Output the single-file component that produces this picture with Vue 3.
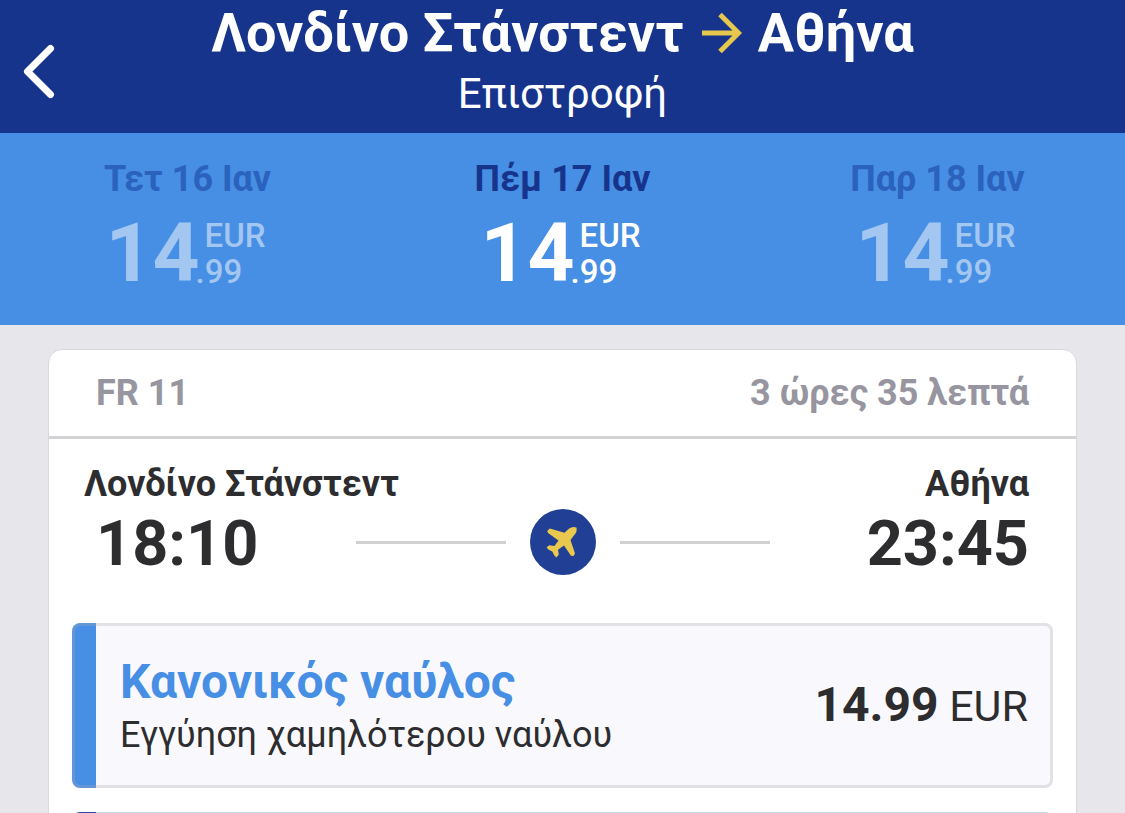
<script setup>
import { ref } from 'vue'

const days = [
  { label: 'Τετ 16 Ιαν', whole: '14', cents: '.99', currency: 'EUR' },
  { label: 'Πέμ 17 Ιαν', whole: '14', cents: '.99', currency: 'EUR' },
  { label: 'Παρ 18 Ιαν', whole: '14', cents: '.99', currency: 'EUR' },
]
const selected = ref(1)
</script>

<template>
  <div class="page">
    <header class="header">
      <button class="back" type="button" aria-label="Πίσω">
        <svg width="34" height="58" viewBox="0 0 34 58" fill="none" stroke="#fff" stroke-width="7" stroke-linecap="round" stroke-linejoin="round">
          <path d="M29.500 6.500 6.500 29.500 29.500 52.500" />
        </svg>
      </button>
      <div class="heading">
        <h1 class="title">
          <span>Λονδίνο Στάνστεντ</span>
          <svg width="42" height="42" viewBox="0 0 42 42" fill="none" stroke="#e6c84f" stroke-width="5">
            <path d="M2 21H38M20 2.500 38.500 21 20 39.500" />
          </svg>
          <span>Αθήνα</span>
        </h1>
        <p class="subtitle">Επιστροφή</p>
      </div>
    </header>

    <nav class="days">
      <button
        v-for="(day, i) in days"
        :key="day.label"
        type="button"
        class="day"
        :class="{ active: i === selected }"
        @click="selected = i"
      >
        <span class="date">{{ day.label }}</span>
        <span class="price">
          <span class="whole">{{ day.whole }}</span>
          <span class="side">
            <span class="currency">{{ day.currency }}</span>
            <span>{{ day.cents }}</span>
          </span>
        </span>
      </button>
    </nav>

    <main class="card">
      <div class="card-head">
        <span>FR 11</span>
        <span>3 ώρες 35 λεπτά</span>
      </div>
      <section class="route">
        <div class="cities">
          <span>Λονδίνο Στάνστεντ</span>
          <span>Αθήνα</span>
        </div>
        <div class="times">
          <time class="time">18:10</time>
          <div class="wire">
            <span class="line"></span>
            <svg width="66" height="66" viewBox="0 0 66 66">
              <circle cx="33" cy="33" r="33" fill="#213f94" />
              <path fill="#e8c84e" d="M46.500 18.500C47.200 22 46 24.500 43.500 27L40.500 31L45 44.500L43.500 47L41 46.800L34 36.500L28 40.800L28.800 45.500L26.500 48.500L24.300 46.500L22.300 42.500L18.300 40.500L16.600 38.300L19.300 36.300L24.500 37L28.500 31.500L18 24L17.200 22L19.800 19.500L34.500 23.800L38 20.500C40.500 18 43.500 17.300 46.500 18.500Z" />
            </svg>
            <span class="line"></span>
          </div>
          <time class="time end">23:45</time>
        </div>
      </section>

      <section class="fares">
        <button type="button" class="fare">
          <span class="fare-text">
            <span class="fare-name">Κανονικός ναύλος</span>
            <span class="fare-note">Εγγύηση χαμηλότερου ναύλου</span>
          </span>
          <span class="fare-price"><strong>14.99</strong> EUR</span>
        </button>
        <div class="fare plus"></div>
      </section>
    </main>
  </div>
</template>

<style>
body {
  background: #e6e6eb;
}
</style>

<style scoped>
.page {
  height: 100vh;
  overflow: hidden;
  background: #e6e6eb;
  color: #2d2d2f;
  font-family: Roboto, "Noto Sans", sans-serif;
}

button {
  margin: 0;
  padding: 0;
  border: 0;
  background: none;
  color: inherit;
  font: inherit;
  cursor: pointer;
}

.header {
  display: grid;
  grid-template-columns: 1fr auto 1fr;
  background: #17348d;
  color: #fff;
  padding-bottom: 15px;
}

.back {
  justify-self: start;
  align-self: start;
  padding: 42px 21px 0;
}

.back svg,
.title svg,
.wire svg {
  display: block;
}

.title {
  display: flex;
  align-items: center;
  gap: 16px;
  margin: 0;
  font-size: 54px;
  font-weight: 700;
  line-height: 66px;
}

.subtitle {
  margin: 4px 0 0;
  font-size: 42px;
  font-weight: 400;
  line-height: 48px;
  text-align: center;
}

.days {
  display: grid;
  grid-template-columns: repeat(3, 1fr);
  background: #478fe4;
}

.day {
  display: flex;
  flex-direction: column;
  align-items: center;
  gap: 10px;
  padding: 24px 0 30px;
  color: #a3c7f1;
}

.date {
  color: #2b62bd;
  font-size: 36px;
  font-weight: 700;
  line-height: 44px;
}

.price {
  display: flex;
  font-weight: 700;
}

.whole {
  font-size: 82px;
  line-height: 84px;
}

.side {
  display: flex;
  flex-direction: column;
  align-items: flex-start;
  margin-left: -4px;
  padding: 7px 4px 0 0;
  font-size: 33px;
  font-weight: 500;
  line-height: 36px;
}

.currency {
  padding-left: 9px;
}

.day.active {
  color: #fff;
}

.day.active .date {
  color: #17348d;
}

.card {
  margin: 24px 48px 0;
  border: 1px solid #d8d8dd;
  border-radius: 14px 14px 0 0;
  background: #fff;
}

.card-head {
  display: flex;
  justify-content: space-between;
  padding: 0 47px;
  border-bottom: 3px solid #d3d3d6;
  color: #9695a0;
  font-size: 36px;
  font-weight: 700;
  line-height: 86px;
}

.route {
  padding: 23px 47px 0 35px;
}

.cities {
  display: flex;
  justify-content: space-between;
  font-size: 36px;
  font-weight: 700;
  line-height: 44px;
}

.times {
  display: grid;
  grid-template-columns: 1fr auto 1fr;
  margin-top: 3px;
  padding-left: 12px;
}

.time {
  font-size: 63px;
  font-weight: 700;
  line-height: 70px;
}

.time.end {
  text-align: right;
}

.wire {
  display: flex;
  align-items: center;
  align-self: start;
  gap: 24px;
}

.line {
  width: 150px;
  height: 3px;
  background: #d1d1d4;
}

.fares {
  display: flex;
  flex-direction: column;
  gap: 24px;
  padding: 44px 23px 24px;
}

.fare {
  display: flex;
  align-items: center;
  justify-content: space-between;
  box-sizing: border-box;
  padding: 28px 22px 28px 45px;
  border: 3px solid rgba(170, 170, 180, 0.3);
  border-radius: 8px;
  background: linear-gradient(to right, #478fe4 24px, #f9f9fd 24px) border-box;
  text-align: left;
}

.fare-text {
  display: flex;
  flex-direction: column;
  gap: 3px;
}

.fare-name {
  color: #478fe4;
  font-size: 48px;
  font-weight: 700;
  line-height: 56px;
}

.fare-note {
  font-size: 36px;
  line-height: 44px;
}

.fare-price {
  font-size: 43px;
  font-weight: 400;
  line-height: 56px;
}

.fare-price strong {
  font-size: 48px;
  font-weight: 700;
}

.fare.plus {
  height: 165px;
  border-color: transparent;
  background:
    linear-gradient(to right, #2c4aa6 24px, transparent 24px) border-box,
    linear-gradient(#f4fafe, #f4fafe) padding-box,
    linear-gradient(#b8ddf2, #b8ddf2) border-box;
}
</style>
